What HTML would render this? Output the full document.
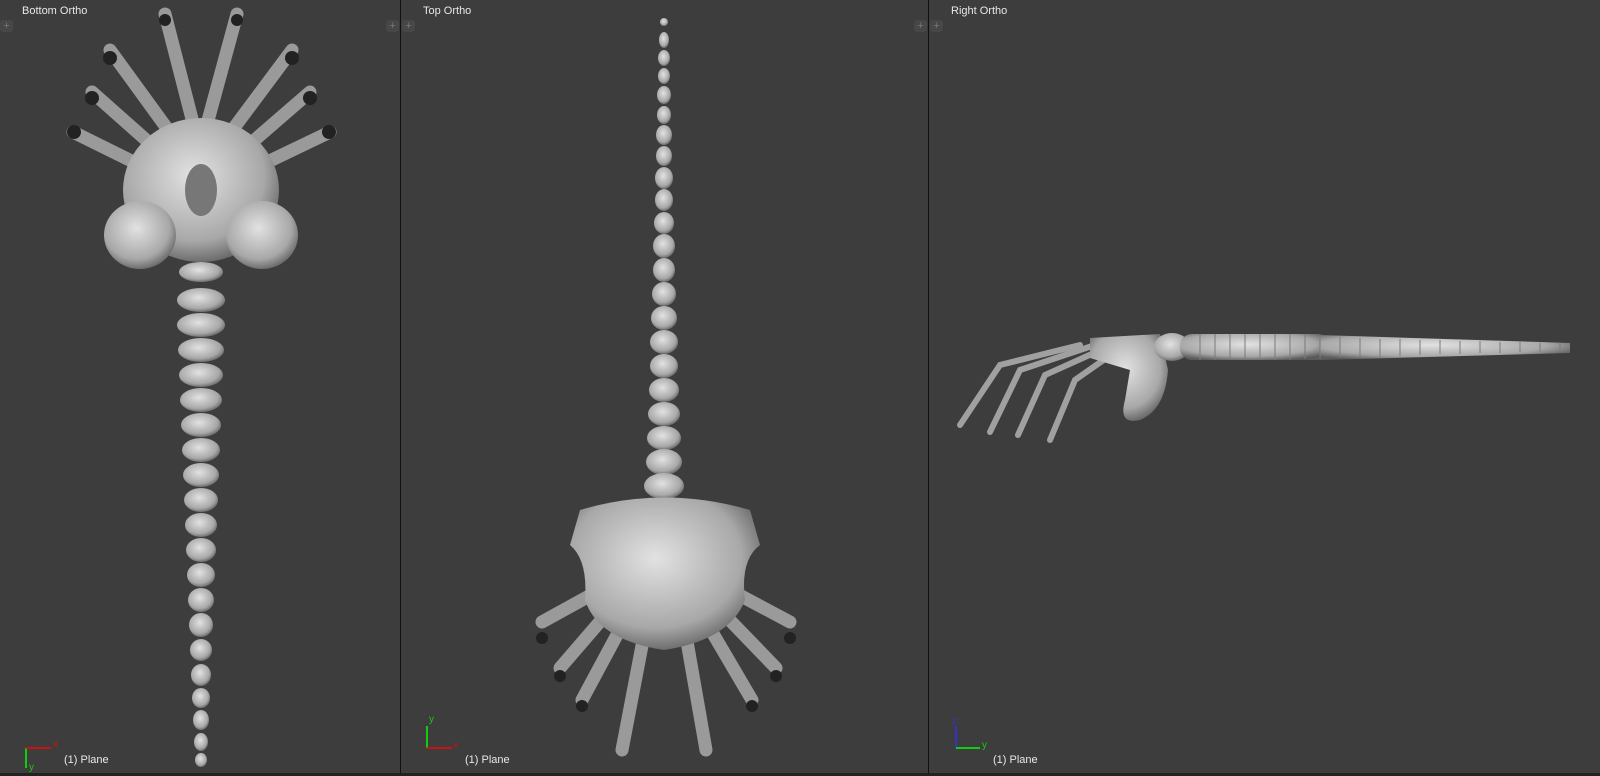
<!DOCTYPE html>
<html><head><style>
body{margin:0;width:1600px;height:776px;background:#3d3d3d;overflow:hidden;position:relative;font-family:"Liberation Sans",sans-serif}
.vp{position:absolute;top:0;height:773px;background:#3d3d3d}
.lbl{position:absolute;top:5px;color:#e8e8e8;font-size:11px}
.pl{position:absolute;top:754px;color:#e8e8e8;font-size:11px}
.div{position:absolute;top:0;width:1px;height:776px;background:#111}
.plus{position:absolute;top:20px;width:13px;height:12px;background:#474747;border-radius:3px;color:#777;font-size:11px;line-height:12px;text-align:center}
</style></head><body>
<div class="lbl" style="left:22px">Bottom Ortho</div>
<div class="lbl" style="left:423px">Top Ortho</div>
<div class="lbl" style="left:951px">Right Ortho</div>
<div class="pl" style="left:64px">(1) Plane</div>
<div class="pl" style="left:465px">(1) Plane</div>
<div class="pl" style="left:993px">(1) Plane</div>
<div class="div" style="left:400px"></div>
<div class="div" style="left:928px"></div>
<div style="position:absolute;left:0;top:773px;width:1600px;height:3px;background:#222"></div>
<div class="plus" style="left:0">+</div><div class="plus" style="left:386px">+</div>
<div class="plus" style="left:402px">+</div><div class="plus" style="left:914px">+</div>
<div class="plus" style="left:930px">+</div>
<svg width="1600" height="776" style="position:absolute;left:0;top:0">
<defs>
<radialGradient id="g" cx="45%" cy="40%" r="65%"><stop offset="0" stop-color="#e2e2e2"/><stop offset="0.7" stop-color="#a8a8a8"/><stop offset="1" stop-color="#5a5a5a"/></radialGradient>
</defs>
<g stroke="#555" stroke-width="1">
<!-- axes -->
</g>
<g fill="none" stroke-width="2">
<path d="M27 764V750M27 750h27" stroke="none"/>
<path d="M26 768V748" stroke="#1c1"/><path d="M26 748H51" stroke="#c11"/>
<path d="M427 748V726" stroke="#1c1"/><path d="M427 748H452" stroke="#c11"/>
<path d="M956 748V726" stroke="#33c"/><path d="M956 748H980" stroke="#1c1"/>
</g>
<g font-size="10" font-family="Liberation Sans">
<text x="53" y="747" fill="#c11">x</text><text x="29" y="770" fill="#1c1">y</text>
<text x="429" y="722" fill="#1c1">y</text><text x="453" y="748" fill="#c11">x</text>
<text x="952" y="724" fill="#33c">z</text><text x="982" y="748" fill="#1c1">y</text>
</g>
<!-- left model legs -->
<g stroke="#9a9a9a" stroke-width="13" stroke-linecap="round">
<path d="M200 150L165 14"/><path d="M200 150L237 14"/>
<path d="M190 160L110 50"/><path d="M210 160L292 50"/>
<path d="M180 170L92 92"/><path d="M220 170L310 92"/>
<path d="M170 180L73 132"/><path d="M230 180L330 132"/>
</g>
<g fill="#222"><circle cx="165" cy="20" r="6"/><circle cx="237" cy="20" r="6"/><circle cx="110" cy="58" r="7"/><circle cx="292" cy="58" r="7"/><circle cx="92" cy="98" r="7"/><circle cx="310" cy="98" r="7"/><circle cx="74" cy="132" r="7"/><circle cx="329" cy="132" r="7"/></g>
<ellipse cx="201" cy="190" rx="78" ry="72" fill="url(#g)"/>
<ellipse cx="140" cy="235" rx="36" ry="34" fill="url(#g)"/>
<ellipse cx="262" cy="235" rx="36" ry="34" fill="url(#g)"/>
<ellipse cx="201" cy="190" rx="16" ry="26" fill="#777"/>
<g fill="url(#g)">
<ellipse cx="201" cy="272" rx="22" ry="10"/>
<ellipse cx="201" cy="300" rx="24" ry="12"/><ellipse cx="201" cy="325" rx="24" ry="12"/><ellipse cx="201" cy="350" rx="23" ry="12"/><ellipse cx="201" cy="375" rx="22" ry="12"/><ellipse cx="201" cy="400" rx="21" ry="12"/><ellipse cx="201" cy="425" rx="20" ry="12"/><ellipse cx="201" cy="450" rx="19" ry="12"/><ellipse cx="201" cy="475" rx="18" ry="12"/><ellipse cx="201" cy="500" rx="17" ry="12"/><ellipse cx="201" cy="525" rx="16" ry="12"/><ellipse cx="201" cy="550" rx="15" ry="12"/><ellipse cx="201" cy="575" rx="14" ry="12"/><ellipse cx="201" cy="600" rx="13" ry="12"/><ellipse cx="201" cy="625" rx="12" ry="12"/><ellipse cx="201" cy="650" rx="11" ry="11"/><ellipse cx="201" cy="675" rx="10" ry="11"/><ellipse cx="201" cy="698" rx="9" ry="10"/><ellipse cx="201" cy="720" rx="8" ry="10"/><ellipse cx="201" cy="742" rx="7" ry="9"/><ellipse cx="201" cy="760" rx="6" ry="7"/>
</g>
<!-- middle model -->
<g stroke="#9a9a9a" stroke-width="13" stroke-linecap="round">
<path d="M600 590L542 622"/><path d="M730 590L790 622"/>
<path d="M610 610L560 668"/><path d="M720 610L776 668"/>
<path d="M625 620L582 700"/><path d="M705 620L752 700"/>
<path d="M645 630L622 750"/><path d="M685 630L706 750"/>
</g>
<g fill="#222"><circle cx="542" cy="638" r="6"/><circle cx="790" cy="638" r="6"/><circle cx="560" cy="676" r="6"/><circle cx="776" cy="676" r="6"/><circle cx="582" cy="706" r="6"/><circle cx="752" cy="706" r="6"/></g>
<g fill="url(#g)">
<ellipse cx="664" cy="22" rx="4" ry="4"/>
<ellipse cx="664" cy="40" rx="5" ry="8"/><ellipse cx="664" cy="58" rx="6" ry="8"/><ellipse cx="664" cy="76" rx="6" ry="8"/><ellipse cx="664" cy="95" rx="7" ry="9"/><ellipse cx="664" cy="115" rx="7" ry="9"/><ellipse cx="664" cy="135" rx="8" ry="10"/><ellipse cx="664" cy="156" rx="8" ry="10"/><ellipse cx="664" cy="178" rx="9" ry="11"/><ellipse cx="664" cy="200" rx="9" ry="11"/><ellipse cx="664" cy="223" rx="10" ry="11"/><ellipse cx="664" cy="246" rx="11" ry="12"/><ellipse cx="664" cy="270" rx="11" ry="12"/><ellipse cx="664" cy="294" rx="12" ry="12"/><ellipse cx="664" cy="318" rx="13" ry="12"/><ellipse cx="664" cy="342" rx="14" ry="12"/><ellipse cx="664" cy="366" rx="14" ry="12"/><ellipse cx="664" cy="390" rx="15" ry="12"/><ellipse cx="664" cy="414" rx="16" ry="12"/><ellipse cx="664" cy="438" rx="17" ry="12"/><ellipse cx="664" cy="462" rx="18" ry="13"/><ellipse cx="664" cy="486" rx="20" ry="13"/>
<path d="M580 510Q664 485 750 510L760 545Q740 560 745 600Q730 640 664 650Q598 640 585 600Q588 560 570 545Z"/>
</g>
<!-- right model -->
<g stroke="#a0a0a0" stroke-width="6" stroke-linecap="round" fill="none">
<path d="M1080 345L1000 365L960 425"/><path d="M1095 345L1020 370L990 432"/><path d="M1105 348L1045 375L1018 435"/><path d="M1115 352L1075 380L1050 440"/>
</g>
<g fill="url(#g)">
<path d="M1090 338L1160 334L1168 370Q1165 410 1140 420Q1118 425 1125 400L1130 370L1090 358Z"/>
<ellipse cx="1172" cy="347" rx="18" ry="14"/>
<rect x="1180" y="334" width="150" height="26" rx="12"/>
<path d="M1320 335L1570 343L1570 353L1320 360Z"/>
</g>
<g stroke="#7a7a7a" stroke-width="1">
<path d="M1200 334v26M1215 334v26M1230 334v26M1245 334v26M1260 334v26M1275 334v26M1290 334v26M1305 335v24M1320 336v23M1340 337v21M1360 338v19M1380 339v18M1400 339v17M1420 340v15M1440 340v14M1460 341v13M1480 341v12M1500 342v11M1520 342v10M1540 343v9M1560 343v9"/>
</g>
</svg>
</body></html>
